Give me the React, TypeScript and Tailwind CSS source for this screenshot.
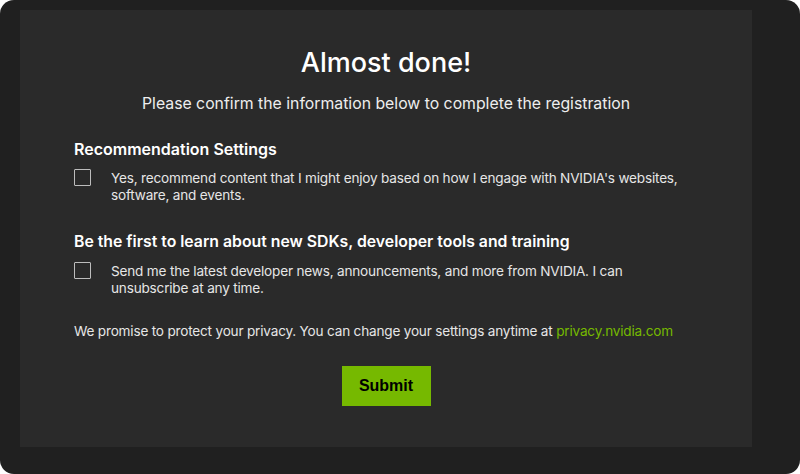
import React from 'react';

const Check: React.FC<{ label: React.ReactNode }> = ({ label }) => (
  <label className="flex items-start gap-[20px] cursor-pointer">
    <span className="mt-[-1px] w-[17px] h-[17px] shrink-0 border-[1.5px] border-[#bdbdbd] rounded-[1px]"></span>
    <span className="text-[13.6px] leading-[17px] tracking-[-0.2px] text-[#e6e6e6]">{label}</span>
  </label>
);

const App: React.FC = () => {
  return (
    <div className="w-[800px] h-[474px] bg-white">
      <div className="w-full h-full rounded-[14px] bg-[#202020] pt-[10px] pl-[20px] pr-[48px] pb-[27px] font-['Inter',sans-serif]">
        <div className="h-full bg-[#2a2a2a] px-[54px] pt-[36px]">
          <h1 className="text-center text-white text-[27px] leading-[34px] font-medium">Almost done!</h1>
          <p className="text-center text-[#eeeeee] text-[15.8px] leading-[20px] mt-[14px]">
            Please confirm the information below to complete the registration
          </p>

          <h2 className="mt-[25px] text-white text-[16px] leading-[20px] font-semibold">Recommendation Settings</h2>
          <div className="mt-[11px] pr-[10px]">
            <Check label="Yes, recommend content that I might enjoy based on how I engage with NVIDIA's websites, software, and events." />
          </div>

          <h2 className="mt-[28px] text-white text-[15.8px] leading-[20px] font-semibold">
            Be the first to learn about new SDKs, developer tools and training
          </h2>
          <div className="mt-[11px] pr-[60px]">
            <Check label="Send me the latest developer news, announcements, and more from NVIDIA. I can unsubscribe at any time." />
          </div>

          <p className="mt-[25px] text-[13.6px] leading-[18px] tracking-[-0.2px] text-[#e6e6e6] whitespace-nowrap">
            We promise to protect your privacy. You can change your settings anytime at{' '}
            <a className="text-[#76b900]">privacy.nvidia.com</a>
          </p>

          <div className="flex justify-center mt-[26px]">
            <button className="w-[89px] h-[40px] bg-[#76b900] text-black text-[16px] font-bold font-['Liberation_Sans',Arial,sans-serif]">
              Submit
            </button>
          </div>
        </div>
      </div>
    </div>
  );
};

export default App;
